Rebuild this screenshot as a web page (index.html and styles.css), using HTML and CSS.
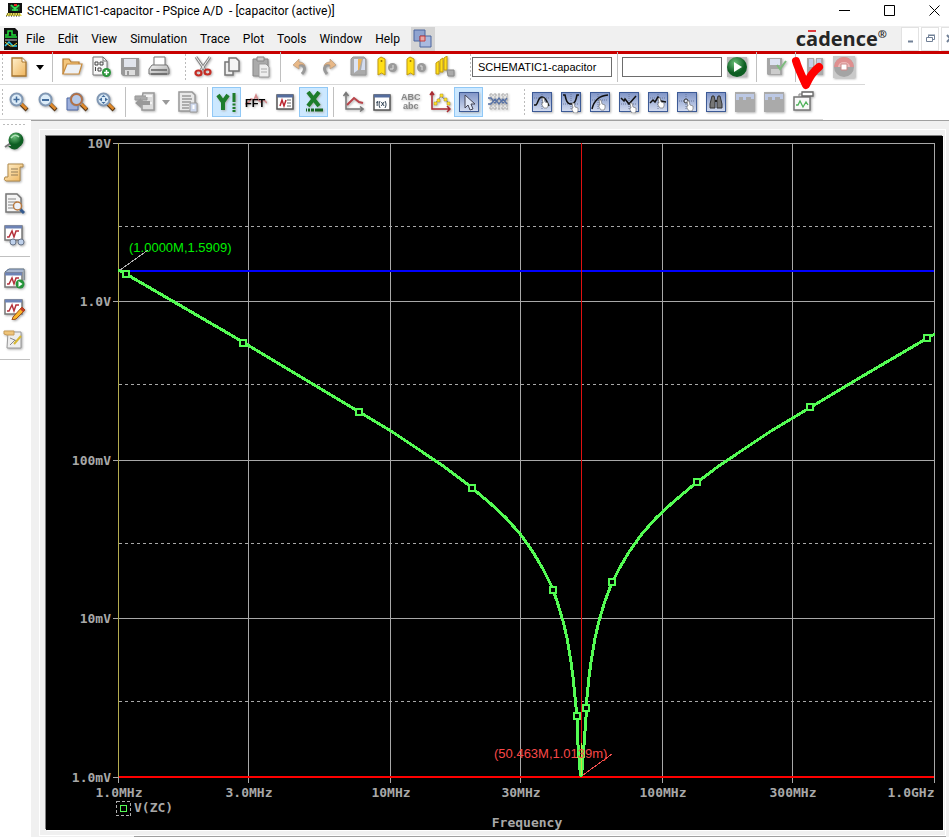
FILE: index.html
```
<!DOCTYPE html>
<html lang="en">
<head>
<meta charset="utf-8">
<title>SCHEMATIC1-capacitor - PSpice A/D</title>
<link rel="stylesheet" href="styles.css">
</head>
<body>
<svg class="defs" aria-hidden="true">
  <defs>
    <linearGradient id="paper" x2="1" y2="1"><stop offset="0" stop-color="#fff0cc"/><stop offset="1" stop-color="#eeb45c"/></linearGradient>
    <linearGradient id="steel" x2="1" y2="1"><stop offset="0" stop-color="#f4f4f4"/><stop offset="1" stop-color="#a8a8a8"/></linearGradient>
    <linearGradient id="blue" x2="0" y2="1"><stop offset="0" stop-color="#7f94c6"/><stop offset="1" stop-color="#d3dcf0"/></linearGradient>
    <radialGradient id="green" cx=".4" cy=".3"><stop offset="0" stop-color="#6cc07a"/><stop offset="1" stop-color="#0d5e22"/></radialGradient>
    <g id="lens"><path d="M12 12l7 7" stroke="#5b3a17" stroke-width="4"/><path d="M12.500 12l6 6" stroke="#e08a2c" stroke-width="2.500"/><circle cx="8.500" cy="8.500" r="6" fill="#dcecf8" stroke="#8198b4" stroke-width="2"/></g>
    <g id="tile"><rect x="1.500" y="1.500" width="19" height="19" fill="url(#blue)" stroke="#3c5a96"/></g>
    <path id="hand" d="M0 0l2 0 1 4 3 1 0 3-1 2-3 0-2-3 0-2 1 0z" fill="#fff" stroke="#666" stroke-width=".6"/>
    <path id="axes" d="M4 2v16h17M1.500 5L4 1.500 6.500 5M18 15.500l3 2.500-3 2.500" fill="none" stroke="#777" stroke-width="1.500"/>
    <g id="graph"><rect x="2" y="2" width="17" height="14" fill="#fff" stroke="#777" stroke-width="1.500"/><path d="M2 3h17" stroke="#6d83b5" stroke-width="3"/><path d="M4 13h2l3-6 2 6 2-6h3" fill="none" stroke="#b5323c" stroke-width="1.500"/></g>
  </defs>
</svg>

<header class="titlebar">
  <svg class="app-icon" viewBox="0 0 17 16"><path d="M2 1h14v10H2z" fill="#111"/><path d="M4 3h10v6H4z" fill="#174b22"/><path d="M5 3l4 4 4-4M9 5v4M6 8h6" stroke="#35e054" stroke-width="1.500" fill="none"/><path d="M8 2h3v2H8z" fill="#e22"/><path d="M1 11h13l2 3H0z" fill="#e6dc50"/><path d="M1 12h13M0 14h14" stroke="#111" stroke-dasharray="1 1.500"/></svg>
  <h1>SCHEMATIC1-capacitor - PSpice A/D &nbsp;- [capacitor (active)]</h1>
  <div class="window-controls">
    <button aria-label="Minimize"><svg viewBox="0 0 11 11"><path d="M0 5.500h11"/></svg></button>
    <button aria-label="Maximize"><svg viewBox="0 0 11 11"><path d="M.5.5h10v10H.5z"/></svg></button>
    <button aria-label="Close"><svg viewBox="0 0 11 11"><path d="M.5.500l10 10M10.500.5l-10 10"/></svg></button>
  </div>
</header>

<nav class="menubar">
  <svg class="doc-icon" viewBox="0 0 14 22"><path d="M0 0h11l3 3v19H0z" fill="#111"/><path d="M1 7h3V3h4v4h4M1 9h12" stroke="#22dc3a" stroke-width="1.500" fill="none"/><path d="M1 12h12" stroke="#ccc"/><path d="M1 18l4-4 4 4h4" stroke="#25c3e8" stroke-width="1.500" fill="none"/><path d="M1 14l5 4h3l4-3" stroke="#e7d83a" fill="none"/></svg>
  <button>File</button><button>Edit</button><button>View</button><button>Simulation</button><button>Trace</button><button>Plot</button><button>Tools</button><button>Window</button><button>Help</button>
  <button class="overlap" aria-label="Cascade windows"><svg viewBox="0 0 20 20"><path d="M1 1h11v11H1z" fill="#8fa3d0" stroke="#4a649d"/><path d="M7 7h11v11H7z" fill="#a9badf" stroke="#4a649d"/><path d="M7 7h5v5H7z" fill="#e7a7a7" stroke="#c23d3d"/></svg></button>
  <div class="brand">c<span class="macron">a</span>dence<sup>®</sup></div>
  <div class="child-controls">
    <button aria-label="Minimize child"><svg viewBox="0 0 9 9"><path d="M2 7.500h5" stroke-width="2"/></svg></button>
    <button aria-label="Restore child"><svg viewBox="0 0 9 9"><path d="M2.500 3V1.500h6v4H7M.5 3.500h6v4h-6zM2 1h7"/></svg></button>
    <button aria-label="Close child"><svg viewBox="0 0 9 9"><path d="M1 1l6 7M7 1L1 8" stroke-width="2"/></svg></button>
  </div>
</nav>

<div class="toolbars">
  <div class="toolbar first" role="toolbar" aria-label="File and simulation">
    <span class="grip start"></span>
    <button aria-label="New"><svg viewBox="0 0 22 22"><path d="M4 2h10l4 4v14H4z" fill="url(#paper)" stroke="#a8762e" stroke-width="1.300"/><path d="M14 2v4h4" fill="#fff" stroke="#a8762e"/></svg></button>
    <button class="caret" aria-label="New options"><svg viewBox="0 0 8 5"><path d="M0 0h8L4 5z"/></svg></button>
    <span class="sep"></span>
    <button aria-label="Open"><svg viewBox="0 0 22 22"><path d="M2 18V3h6l2 3h8v3" fill="#f3c67e" stroke="#b77a2b" stroke-width="1.200"/><path d="M2 18L6 8h15l-3 10z" fill="#eef1f5" stroke="#c98c3d" stroke-width="1.200"/></svg></button>
    <button aria-label="Add data"><svg viewBox="0 0 22 22"><path d="M3 1h10l4 4v14H3z" fill="#f7f7f7" stroke="#777"/><path d="M13 1v4h4" fill="none" stroke="#777"/><path d="M5 6h3v3H5zM10 6h3v3h-3zM5.500 11v4M8 12h3v3H8z" fill="none" stroke="#444"/><circle cx="16.500" cy="16.500" r="4.500" fill="#2b963c"/><path d="M14 16.500h5M16.500 14v5" stroke="#fff" stroke-width="1.500"/></svg></button>
    <button aria-label="Save"><svg viewBox="0 0 22 22"><path d="M2 2h18v18H4l-2-2z" fill="#999"/><path d="M5 3h12v8H5z" fill="#e1e4ec"/><path d="M6 14h10v5H6z" fill="#ddd"/><path d="M8 15h2v4H8z" fill="#999"/></svg></button>
    <button aria-label="Print"><svg viewBox="0 0 22 22"><path d="M6 10V1h11v9" fill="#fff" stroke="#777"/><path d="M4 9h15l2 4v5H1v-5z" fill="url(#steel)" stroke="#777"/><path d="M3 14h16M3 18h16" stroke="#666" stroke-width="1.500"/></svg></button>
    <span class="grip"></span>
    <button aria-label="Cut"><svg viewBox="0 0 22 22"><path d="M4 1l9 13M18 1L9 14" stroke="#888" stroke-width="3"/><path d="M4 1l9 13M18 1L9 14" stroke="#eee"/><ellipse cx="6.500" cy="17" rx="3" ry="2.500" fill="none" stroke="#c52c24" stroke-width="2.200"/><ellipse cx="15.500" cy="16" rx="3" ry="2.500" fill="none" stroke="#c52c24" stroke-width="2.200"/></svg></button>
    <button aria-label="Copy"><svg viewBox="0 0 22 22"><path d="M4 6h8v13H4z" fill="#eee" stroke="#777" stroke-width="1.500"/><path d="M8 2h7l3 3v10H8z" fill="#f4f4f4" stroke="#777" stroke-width="1.500"/></svg></button>
    <button aria-label="Paste"><svg viewBox="0 0 22 22"><path d="M3 3h15v17H3z" fill="#aaa" stroke="#888"/><path d="M7 1h7v4H7z" fill="#ccc" stroke="#888"/><path d="M9 8h7l3 3v10H9z" fill="#eee" stroke="#999"/><path d="M11 13h6M11 16h6" stroke="#aaa"/></svg></button>
    <span class="sep"></span>
    <button aria-label="Undo"><svg viewBox="0 0 22 22"><path d="M8 9c7-1 10 3 5 9" fill="none" stroke="#999" stroke-width="3"/><path d="M4 9l6-6v3c3 0 5 1 6 4-2-2-4-2-6-1v4z" fill="#e8b887" stroke="#b49476" stroke-width=".6"/></svg></button>
    <button aria-label="Redo"><svg viewBox="0 0 22 22"><path d="M14 9C7 8 4 12 9 18" fill="none" stroke="#999" stroke-width="3"/><path d="M18 9l-6-6v3c-3 0-5 1-6 4 2-2 4-2 6-1v4z" fill="#e8b887" stroke="#b49476" stroke-width=".6"/></svg></button>
    <button aria-label="Toggle bookmark"><svg viewBox="0 0 22 22"><path d="M4 3l2-2h11l2 2v16H4z" fill="#aaa" stroke="#999"/><path d="M7 3h4v11l-4 3z" fill="#dce4f3"/><path d="M11 3h4l-3 11h-1z" fill="#edb559"/><path d="M16 3h2v11h-4z" fill="#d3dcf0"/></svg></button>
    <button aria-label="Next bookmark"><svg viewBox="0 0 22 22"><path d="M2 3l3-2 4 2v16l-3.500-2L2 19z" fill="#ffdf18" stroke="#c29b10"/><circle cx="5.500" cy="5" r="1" fill="#947000"/><circle cx="16.500" cy="11.500" r="4.500" fill="#9a9a9a"/><path d="M17 9v4h-3" stroke="#ddd" fill="none"/></svg></button>
    <button aria-label="Previous bookmark"><svg viewBox="0 0 22 22"><path d="M2 3l3-2 4 2v16l-3.500-2L2 19z" fill="#ffdf18" stroke="#c29b10"/><circle cx="5.500" cy="5" r="1" fill="#947000"/><circle cx="16.500" cy="11.500" r="4.500" fill="#9a9a9a"/><path d="M15 10h2v4" stroke="#ddd" fill="none"/></svg></button>
    <button aria-label="Clear bookmarks"><svg viewBox="0 0 22 22"><path d="M2 7l3-2v13H2zM6 4l3-2v14H6zM10 2l3-2v14h-3z" fill="#ffdf18" stroke="#c29b10"/><path d="M13 14h7v6h-6z" fill="#aaa" stroke="#888"/></svg></button>
    <span class="grip narrow"></span>
    <input class="profile" aria-label="Simulation profile" value="SCHEMATIC1-capacitor">
    <span class="sep"></span>
    <input class="command" aria-label="Command">
    <button aria-label="Run"><svg viewBox="0 0 22 22"><rect x="1" y="1" width="20" height="20" fill="#bbb"/><circle cx="11" cy="11" r="10" fill="url(#green)"/><path d="M8 6l8 5-8 5z" fill="#fff"/></svg></button>
    <span class="sep"></span>
    <button aria-label="Save check point"><svg viewBox="0 0 22 22"><path d="M2 2h15v17H3l-1-1z" fill="#a6a6a6"/><path d="M5 3h10v6H5z" fill="#dce3f2"/><path d="M6 13h9v5H6z" fill="#ccc"/><path d="M12 9l3 4 6-8" stroke="#7dbb7d" stroke-width="2" fill="none"/></svg></button>
    <span class="sep"></span>
    <button aria-label="Pause"><svg viewBox="0 0 22 22"><path d="M3 2h7v17H3zM12 2h7v17h-7z" fill="#aaa"/><path d="M5 3h4v8H5zM13 3h4v8h-4z" fill="#c3cee8"/></svg></button>
    <button aria-label="Stop"><svg viewBox="0 0 22 22"><rect width="22" height="22" fill="#c9c9c9"/><circle cx="11" cy="11" r="10" fill="#a4a4a4"/><path d="M1 11a10 10 0 0 1 20 0z" fill="#df8f8f"/><path d="M5 11a6 5 0 0 1 12 0" fill="#edbaba"/><path d="M8 8h6v6H8z" fill="#fff" stroke="#c88"/></svg></button>
  </div>

  <div class="toolbar second" role="toolbar" aria-label="View and cursor">
    <span class="grip start"></span>
    <button aria-label="Zoom in"><svg viewBox="0 0 22 22"><use href="#lens"/><path d="M5.500 8.500h6M8.500 5.500v6" stroke="#416b9b" stroke-width="1.500"/></svg></button>
    <button aria-label="Zoom out"><svg viewBox="0 0 22 22"><use href="#lens"/><path d="M5 9h7" stroke="#416b9b" stroke-width="2"/></svg></button>
    <button aria-label="Zoom area"><svg viewBox="0 0 22 22"><path d="M1 7h11v12H1z" fill="#9eb0dc" stroke="#4e69a5"/><g transform="translate(2)"><use href="#lens"/><circle cx="8.500" cy="8.500" r="5.500" fill="#b6cae9" stroke="#b47146" stroke-width="2"/></g></svg></button>
    <button aria-label="Zoom fit"><svg viewBox="0 0 22 22"><use href="#lens"/><path d="M4 8.500l3-2v4zM13 8.500l-3-2v4zM8.500 4l-2 2h4zM8.500 13l-2-2h4z" fill="#416b9b"/></svg></button>
    <span class="sep"></span>
    <button aria-label="Log commands"><svg viewBox="0 0 22 22"><path d="M9 2h11v17H8V8z" fill="#ddd" stroke="#999" stroke-width="1.500"/><path d="M1 5h12v4H1z" fill="#aaa" stroke="#999"/><path d="M12 5h6M12 12h6" stroke="#f4f4f4" stroke-width="2"/><path d="M1 12l6-5v3h9v4H7v3z" fill="#999"/></svg></button>
    <button class="caret muted" aria-label="Log options"><svg viewBox="0 0 8 5"><path d="M0 0h8L4 5z"/></svg></button>
    <button aria-label="Load"><svg viewBox="0 0 22 22"><path d="M2 1h13l3 3v16H2z" fill="#e8e8e8" stroke="#999" stroke-width="1.500"/><path d="M5 5h9M5 8h10M5 11h9M5 14h7M5 17h7" stroke="#999" stroke-width="1.500"/><path d="M13 12h7v9h-7z" fill="#cfd9ee" stroke="#999"/><path d="M16.500 14v4" stroke="#fff" stroke-width="2"/></svg></button>
    <span class="sep"></span>
    <button class="on" aria-label="Log Y axis"><svg viewBox="0 0 22 22"><path d="M2 4l5 7v8M12 4l-5 7" stroke="#1d7d2c" stroke-width="4" fill="none"/><path d="M18 2v9M18 12.500v2M18 16v2M18 19v2" stroke="#1d7d2c" stroke-width="3"/></svg></button>
    <button aria-label="Fourier transform"><svg viewBox="0 0 22 22"><path d="M0 13l4-2 2-3 3 1 2-5 2 5 3 2 3-2 3 3" stroke="#d5898b" stroke-width="1.500" fill="none"/><text class="fft" x="0" y="16">FFT</text></svg></button>
    <button aria-label="Performance analysis"><svg viewBox="0 0 22 22"><path d="M3 4h16v14H3z" fill="#fff" stroke="#555" stroke-width="1.500"/><path d="M3 5h16" stroke="#546d9e" stroke-width="3"/><path d="M6 15l2-6 2 6 2-6" fill="none" stroke="#bb2530" stroke-width="1.500"/><path d="M13 9h4M13 12h4M13 15h4" stroke="#666"/></svg></button>
    <button class="on" aria-label="Log X axis"><svg viewBox="0 0 22 22"><path d="M5 1l11 14M16 1L5 15" stroke="#1d7d2c" stroke-width="4"/><path d="M3 19h1M5 19h2M8 19h3M12 19h8" stroke="#156420" stroke-width="3"/></svg></button>
    <span class="sep"></span>
    <button aria-label="Add plot"><svg viewBox="0 0 22 22"><use href="#axes"/><path d="M5 14l7-7 5 4 4 1" fill="none" stroke="#b9444a" stroke-width="2"/></svg></button>
    <button aria-label="Evaluate measurement"><svg viewBox="0 0 22 22"><path d="M3 4h16v15H3z" fill="#fff" stroke="#555" stroke-width="1.500"/><path d="M3 5h16" stroke="#546d9e" stroke-width="3"/><text class="fx" x="5" y="15">f(x)</text></svg></button>
    <button aria-label="Text label"><svg viewBox="0 0 22 22"><text class="abc" x="1" y="9">ABC</text><text class="abc" x="3" y="18">abc</text></svg></button>
    <button aria-label="Mark data points"><svg viewBox="0 0 22 22"><path d="M3 1v17h18M1 4l2-3 2 3M18 15l3 3-3 3" stroke="#aa2930" stroke-width="1.500" fill="none"/><path d="M6 13l6-8 8 7" stroke="#777" fill="none"/><path d="M5 11h3v3H5zM11 3h3v3h-3zM8 8h3v3H8zM15 7h3v3h-3zM18 11h3v3h-3z" fill="#ffe125" stroke="#aa9230" stroke-width=".5"/></svg></button>
    <button class="on" aria-label="Toggle cursor"><svg viewBox="0 0 22 22"><use href="#tile"/><path d="M7 4v13l3-3 2 5 3-1-2-5h4z" fill="#dfe7f7" stroke="#445"/></svg></button>
    <button aria-label="Grid traces"><svg viewBox="0 0 22 22"><path d="M2 4h19M2 8h19M2 13h19M2 17h19M4 2v18M8 2v18M12 2v18M16 2v18M20 2v18" stroke="#aaa" stroke-dasharray="2 1"/><path d="M1 7h3l4 5 4-5 4 5 4-5M1 13h3l4-5 4 5 4-5 4 5" fill="none" stroke="#5872a5" stroke-width="1.300"/></svg></button>
    <span class="grip"></span>
    <button aria-label="Cursor peak"><svg viewBox="0 0 22 22"><use href="#tile"/><path d="M11 3v16M3 7h16" stroke="#6a789b" stroke-dasharray="1 1"/><path d="M3 14h2C7 13 7 6 11 6s5 5 7 9" fill="none" stroke="#111" stroke-width="1.500"/><use href="#hand" x="11" y="7"/></svg></button>
    <button aria-label="Cursor trough"><svg viewBox="0 0 22 22"><use href="#tile"/><path d="M11 3v16M3 13h16" stroke="#6a789b" stroke-dasharray="1 1"/><path d="M3 4h2C6 9 7 13 11 13s5-4 6-9h2" fill="none" stroke="#111" stroke-width="1.500"/><use href="#hand" x="12" y="12"/></svg></button>
    <button aria-label="Cursor slope"><svg viewBox="0 0 22 22"><use href="#tile"/><path d="M9 3v16M3 9h16" stroke="#6a789b" stroke-dasharray="1 1"/><path d="M3 18Q6 5 19 4" fill="none" stroke="#111" stroke-width="1.500"/><use href="#hand" x="10" y="9"/></svg></button>
    <button aria-label="Cursor minimum"><svg viewBox="0 0 22 22"><use href="#tile"/><path d="M11 3v16M3 13h16" stroke="#6a789b" stroke-dasharray="1 1"/><path d="M3 7l3 3 1-2 4 5 7-8" fill="none" stroke="#111" stroke-width="1.500"/><use href="#hand" x="12" y="12"/></svg></button>
    <button aria-label="Cursor maximum"><svg viewBox="0 0 22 22"><use href="#tile"/><path d="M11 3v16M3 7h16" stroke="#6a789b" stroke-dasharray="1 1"/><path d="M3 12l3-3 2 2 3-5 3 4 5 1" fill="none" stroke="#111" stroke-width="1.500"/><use href="#hand" x="11" y="7"/></svg></button>
    <button aria-label="Cursor point"><svg viewBox="0 0 22 22"><use href="#tile"/><path d="M10 3v16M3 10h16" stroke="#6a789b" stroke-dasharray="1 1"/><circle cx="10" cy="10" r="2" fill="#d9e1f3" stroke="#333"/><use href="#hand" x="11" y="10"/></svg></button>
    <button aria-label="Cursor search"><svg viewBox="0 0 22 22"><use href="#tile"/><path d="M6 9l1-4h2l1 4v8H5v-4zM12 9l1-4h2l1 4 1 4v4h-5z" fill="#777" stroke="#333"/><path d="M10 10h2" stroke="#222" stroke-width="2"/></svg></button>
    <button aria-label="Next transition"><svg viewBox="0 0 22 22"><rect x="1" y="1" width="20" height="20" fill="#aaa"/><path d="M2 3h18v5h-3V6h-5v3H9V6H5v3H2z" fill="#bcc8e4"/></svg></button>
    <button aria-label="Previous transition"><svg viewBox="0 0 22 22"><rect x="1" y="1" width="20" height="20" fill="#aaa"/><path d="M2 3h18v5h-3V6h-5v3H9V6H5v3H2z" fill="#bcc8e4"/></svg></button>
    <button aria-label="Mark label"><svg viewBox="0 0 22 22"><path d="M2 6h16v13H2z" fill="#f8f8f8" stroke="#777" stroke-width="1.500"/><path d="M4 14h2l2-4 3 6 3-5 2 3" fill="none" stroke="#4fb15a" stroke-width="1.300"/><path d="M7 6V3h4" fill="none" stroke="#888"/><path d="M10 1h11v4H10z" fill="#fff" stroke="#666" stroke-width="1.300"/></svg></button>
  </div>
  <svg class="check-mark" viewBox="0 0 36 36"><path d="M6 7q2 7 10 24q5-12 13-18"/></svg>
</div>

<div class="workspace">
  <aside class="rail" role="toolbar" aria-label="Views">
    <span class="rail-grip"></span>
    <button aria-label="Simulation status"><svg viewBox="0 0 22 22"><path d="M2 16l6-4" stroke="#777" stroke-width="2"/><path d="M5 15q7 7 12 0z" fill="#125c24"/><circle cx="13" cy="9" r="7.500" fill="url(#green)"/><path d="M8 7q4-5 8-1" stroke="#b2e4b9" stroke-width="1.500" fill="none"/></svg></button>
    <button aria-label="Output file"><svg viewBox="0 0 22 22"><path d="M5 2h15v3h-3v14H3q-3-1-1-4h3z" fill="url(#paper)" stroke="#b18a4a"/><path d="M8 7h7M8 10h7M8 13h7" stroke="#937d58"/></svg></button>
    <button aria-label="Find in file"><svg viewBox="0 0 22 22"><path d="M3 1h11l4 4v14H3z" fill="#f5f5f5" stroke="#777" stroke-width="1.500"/><path d="M5 6h8M5 9h9M5 12h9M5 15h7" stroke="#888"/><path d="M17 16l4 4" stroke="#33598e" stroke-width="3"/><circle cx="14.500" cy="13" r="4" fill="#edf2fa" stroke="#b8793f" stroke-width="1.500"/></svg></button>
    <button aria-label="View results"><svg viewBox="0 0 22 22"><use href="#graph"/><circle cx="10" cy="18" r="3" fill="#bfd1eb" stroke="#69758a"/><circle cx="18" cy="18" r="3" fill="#bfd1eb" stroke="#69758a"/></svg></button>
    <span class="rail-sep"></span>
    <button aria-label="Run queue"><svg viewBox="0 0 22 22"><path d="M2 5l4-3h15v11" fill="#eee" stroke="#567"/><path d="M4 3h16M3 5h17" stroke="#637fae"/><g transform="translate(0 4)"><use href="#graph"/></g><circle cx="17" cy="17" r="4.500" fill="#27943a"/><path d="M15.500 14l4 3-4 3z" fill="#fff"/></svg></button>
    <button aria-label="Edit profile"><svg viewBox="0 0 22 22"><use href="#graph"/><path d="M10 19l9-10 3 3-9 9-4 1z" fill="#f7b52b" stroke="#9b4d1c"/><path d="M18 10l3 3" stroke="#c23e28" stroke-width="3"/></svg></button>
    <button aria-label="Edit notes"><svg viewBox="0 0 22 22"><path d="M5 3h13v16H4z" fill="#eee" stroke="#999"/><path d="M1 2h10v4H4L1 5z" fill="#efc479" stroke="#c79c58"/><path d="M7 9l7 3M7 16l5-5" stroke="#888"/><path d="M11 15l7-8" stroke="#d7b834" stroke-width="2"/></svg></button>
    <span class="rail-sep end"></span>
  </aside>

  <main class="document">
    <div class="frame">
      <svg class="plot" viewBox="46 136 897 694" role="img" aria-label="V(ZC) against frequency">
        <g class="grid">
          <path d="M113 143.500h821M113 301.500h821M113 460.500h821M113 618.500h821M113 777.500h821"/>
          <path d="M248.500 143v640M390.500 143v640M520.500 143v640M662.500 143v640M792.500 143v640M934.500 143v640M118.500 777v6"/>
          <path class="minor" d="M119 226.500h815M119 384.500h815M119 543.500h815M119 701.500h815"/>
        </g>
        <path class="axis" d="M118.500 143v634"/>
        <path class="cursor-one" d="M119 271h815"/>
        <path class="cursor-two" d="M119 776.500h815"/>
        <polyline class="trace" points="118,270 126,274 231,335 301,377 351,407 391,431 421,451 446,468 471,487 491,504 506,518 521,535 533,552 543,569 551,585 557,601 563,621 567,638 571,662 573,677 575,697 577,717 578,745 580,770 581,776 582,770 584,745 586,717 587,697 589,677 591,662 595,638 599,621 605,601 611,585 619,569 629,552 641,535 656,518 671,504 691,487 716,468 741,451 771,431 811,407 861,377 931,336 935,334"/>
        <path class="cursor-line" d="M581.500 143v600"/>
        <path class="cursor-overlap" d="M581.500 743v32"/>
        <g class="markers">
          <rect x="123" y="271" width="6" height="6"/><rect x="240" y="340" width="6" height="6"/><rect x="356" y="409" width="6" height="6"/><rect x="469" y="485" width="6" height="6"/><rect x="550" y="587" width="6" height="6"/><rect x="574" y="713" width="6" height="6"/><rect x="583" y="705" width="6" height="6"/><rect x="609" y="579" width="6" height="6"/><rect x="694" y="479" width="6" height="6"/><rect x="807" y="404" width="6" height="6"/><rect x="924" y="335" width="6" height="6"/>
        </g>
        <path class="leader" d="M120 270l28-20"/>
        <path class="leader red" d="M583 775l29-21"/>
        <text class="note" x="129" y="252">(1.0000M,1.5909)</text>
        <text class="note red" x="494" y="758">(50.463M,1.0139m)</text>
        <g class="label end"><text x="111" y="148">10V</text><text x="111" y="306">1.0V</text><text x="111" y="465">100mV</text><text x="111" y="623">10mV</text><text x="111" y="782">1.0mV</text></g>
        <g class="label middle"><text x="119" y="797">1.0MHz</text><text x="249" y="797">3.0MHz</text><text x="391" y="797">10MHz</text><text x="521" y="797">30MHz</text><text x="663" y="797">100MHz</text><text x="793" y="797">300MHz</text><text x="911" y="797">1.0GHz</text><text x="527" y="827">Frequency</text></g>
        <g class="label"><text x="134" y="812">V(ZC)</text></g>
        <rect class="legend-box" x="116.500" y="801.500" width="14" height="14"/>
        <rect class="legend-mark" x="120.500" y="805.500" width="6" height="6"/>
      </svg>
    </div>
    <div class="tab-edge"></div>
  </main>
</div>
</body>
</html>
```
FILE: styles.css
```
* { box-sizing: border-box; }
body {
  margin: 0;
  min-height: 100vh;
  display: flex;
  flex-direction: column;
  overflow: hidden;
  background: #fff;
  color: #000;
  font: 12px/16px "Open Sans", "Noto Sans", sans-serif;
}
button {
  border: 0;
  padding: 0;
  background: none;
  color: inherit;
  font: inherit;
  flex: none;
}
svg { display: block; }
.defs { position: absolute; width: 0; height: 0; }

.titlebar { display: flex; align-items: flex-start; height: 26px; padding: 2px 0 0 6px; }
.app-icon { width: 17px; height: 16px; margin-right: 4px; }
.titlebar h1 { margin: 0; font: 12px/16px Roboto, sans-serif; padding-top: 1px; }
.window-controls { display: flex; margin-left: auto; }
.window-controls button { width: 45px; height: 16px; display: grid; place-items: center; }
.window-controls button:last-child { width: 37px; padding-left: 7px; }
.window-controls svg { width: 11px; height: 11px; fill: none; stroke: #000; }

.menubar {
  display: flex;
  align-items: center;
  height: 25px;
  padding-left: 4px;
  background: #f0f0f0;
  font: 12px/16px Roboto, sans-serif;
}
.doc-icon { width: 14px; height: 22px; margin-right: 2px; flex: none; }
.menubar > button { padding: 0 7px 0 6px; }
.menubar > .overlap { width: 24px; height: 24px; margin-left: 4px; padding: 2px; background: #d4d4d4; }
.overlap svg { width: 20px; height: 20px; }
.brand { margin-left: auto; color: #262626; font: 700 20px/24px "Open Sans", sans-serif; white-space: nowrap; }
.macron { position: relative; }
.macron::before { content: ""; position: absolute; left: 2px; top: 5px; width: 8px; height: 2px; background: #e03a3e; }
.brand sup { font: 700 11px/11px "Open Sans", sans-serif; vertical-align: 8px; }
.child-controls { display: flex; gap: 2px; width: 48px; margin-left: 14px; background: #fff; overflow: hidden; }
.child-controls button { width: 18px; height: 24px; border: 1px solid #e2e2e2; display: grid; place-items: center; }
.child-controls svg { width: 9px; height: 9px; fill: none; stroke: #718096; }

.toolbars { position: relative; border-top: 3px solid #c80000; }
.toolbar { display: flex; align-items: center; width: max-content; border-bottom: 1px solid #d8d8d8; }
.toolbar.first { height: 31px; padding: 0 7px 4px 0; }
.toolbar.second { height: 35px; padding-right: 6px; }
.toolbar button { width: 29px; height: 30px; display: grid; place-items: center; border: 1px solid transparent; }
.toolbar.first button { height: 27px; }
.toolbar button svg { width: 22px; height: 22px; filter: drop-shadow(1px 1px 1px #b0b0b0); }
.toolbar .on { background: #cce8ff; border-color: #90c8f6; }
.toolbar .caret { width: 14px; }
.toolbar .caret svg { width: 8px; height: 5px; filter: none; }
.muted { fill: #999; }
.sep { width: 10px; height: 30px; flex: none; background: linear-gradient(#c0c0c0, #c0c0c0) center / 1px 100% no-repeat; }
.grip { width: 15px; height: 26px; flex: none; background: repeating-linear-gradient(#bbb 0 2px, transparent 2px 4px) 12px 0 / 1px 100% no-repeat; }
.grip.start { width: 4px; background-position: 2px 0; }
.grip.narrow { width: 13px; background-position: 11px 0; }
.toolbar input { height: 20px; border: 1px solid #6d6d6d; padding: 0 5px; background: #fff; font: 11px/16px "Liberation Sans", sans-serif; }
.profile { width: 140px; }
.command { width: 100px; }
.fft { font: 700 11px "Liberation Sans", sans-serif; }
.fx { font: 700 7px "Liberation Sans", sans-serif; fill: #345; }
.abc { font: 700 9px "Liberation Sans", sans-serif; fill: #888; }
.check-mark { position: absolute; left: 790px; top: 0; width: 36px; height: 36px; fill: none; stroke: #f00; stroke-width: 8px; stroke-linecap: round; stroke-linejoin: round; }

.workspace { display: flex; flex: 1; min-height: 0; }
.rail { width: 31px; flex: none; display: flex; flex-direction: column; padding-top: 4px; }
.rail-grip { height: 2px; margin: 0 5px 0 3px; background: repeating-linear-gradient(90deg, #bbb 0 2px, transparent 2px 4px) 0 0 / 100% 1px no-repeat; }
.rail button { width: 27px; height: 31px; display: grid; place-items: center; }
.rail svg { width: 22px; height: 22px; filter: drop-shadow(1px 1px 1px #aaa); }
.rail-sep { height: 12px; margin-right: 1px; background: linear-gradient(#c0c0c0, #c0c0c0) 0 6px / 100% 1px no-repeat; }
.rail-sep.end { background-position: 0 4px; }

.document { flex: 1; min-width: 0; background: #f0f0f0; border-top: 1px solid #a0a0a0; padding: 8px 3px 0 8px; }
.frame { border: 1px solid #fff; padding: 6px 2px 5px 6px; }
.plot { width: 100%; height: auto; background: #000; box-shadow: -1px -1px 0 #808080, 1px 1px 0 #fff; }
.tab-edge { height: 1px; margin-left: 95px; background: #a0a0a0; }

.grid path, .axis, .cursor-one, .cursor-two, .cursor-line, .cursor-overlap, .trace, .markers rect, .leader, .legend-box, .legend-mark { shape-rendering: crispEdges; }
.grid path { stroke: #a8a8a8; fill: none; }
.grid .minor { stroke-dasharray: 3 3; }
.axis { stroke: #b4ac50; }
.cursor-one { stroke: #00f; stroke-width: 2px; }
.cursor-line { stroke: #e01010; }
.cursor-two { stroke: #f00; stroke-width: 2px; }
.cursor-overlap { stroke: #c8e040; }
.trace { fill: none; stroke: #54fc54; stroke-width: 3px; stroke-linejoin: round; }
.markers rect { fill: #000; stroke: #54fc54; stroke-width: 2px; }
.leader { stroke: #b0b0b0; stroke-width: 1px; }
.leader.red { stroke: #f05050; }
.note { font: 13px "Liberation Sans", sans-serif; fill: #00f000; }
.note.red { fill: #f84848; }
.label { font: 700 13px "DejaVu Sans Mono", monospace; fill: #a8a8a8; }
.label.end { text-anchor: end; }
.label.middle { text-anchor: middle; }
.legend-box { fill: none; stroke: #b0b0b0; stroke-dasharray: 3 2; }
.legend-mark { fill: none; stroke: #54fc54; stroke-width: 1px; }
```
